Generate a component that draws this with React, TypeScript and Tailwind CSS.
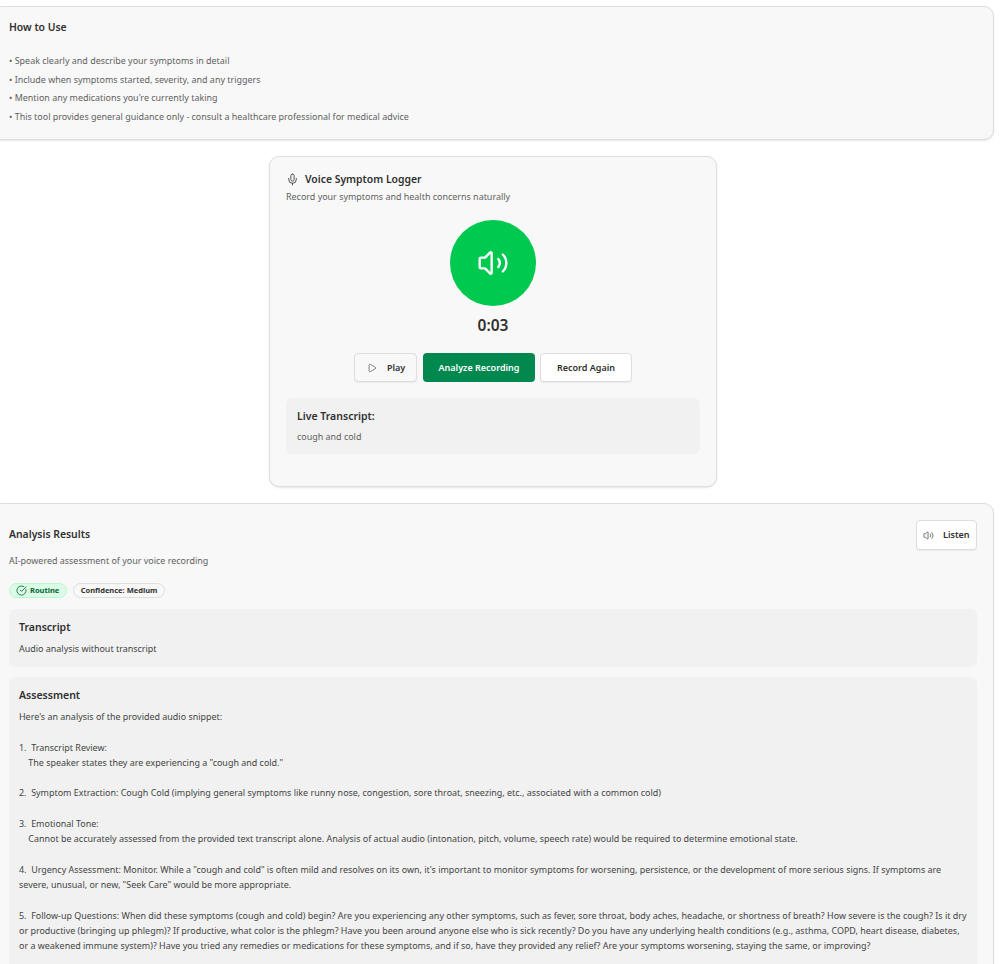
import { CircleCheckBig, Mic, Play, Volume2 } from "lucide-react";

const tips = [
  "Speak clearly and describe your symptoms in detail",
  "Include when symptoms started, severity, and any triggers",
  "Mention any medications you're currently taking",
  "This tool provides general guidance only - consult a healthcare professional for medical advice",
];

const assessment = [
  { lines: ["Here's an analysis of the provided audio snippet:"] },
  { lines: ["1.  Transcript Review:", "    The speaker states they are experiencing a \"cough and cold.\""] },
  { lines: ["2.  Symptom Extraction: Cough Cold (implying general symptoms like runny nose, congestion, sore throat, sneezing, etc., associated with a common cold)"] },
  { lines: ["3.  Emotional Tone:", "    Cannot be accurately assessed from the provided text transcript alone. Analysis of actual audio (intonation, pitch, volume, speech rate) would be required to determine emotional state."] },
  { lines: ["4.  Urgency Assessment: Monitor. While a \"cough and cold\" is often mild and resolves on its own, it's important to monitor symptoms for worsening, persistence, or the development of more serious signs. If symptoms are severe, unusual, or new, \"Seek Care\" would be more appropriate."] },
  { lines: ["5.  Follow-up Questions: When did these symptoms (cough and cold) begin? Are you experiencing any other symptoms, such as fever, sore throat, body aches, headache, or shortness of breath? How severe is the cough? Is it dry or productive (bringing up phlegm)? If productive, what color is the phlegm? Have you been around anyone else who is sick recently? Do you have any underlying health conditions (e.g., asthma, COPD, heart disease, diabetes, or a weakened immune system)? Have you tried any remedies or medications for these symptoms, and if so, have they provided any relief? Are your symptoms worsening, staying the same, or improving?"] },
];

export default function App() {
  return (
    <div className="h-[964px] overflow-hidden bg-white font-['Noto_Sans',sans-serif] text-[#303030]">
      <div className="ml-[-8px] flex w-[1002px] flex-col gap-4 pt-1.5">
        {/* How to use */}
        <section className="h-[134px] rounded-[10px] border border-[#dedede] bg-[#f8f8f8] px-4 pt-[13px] shadow-[0_1px_2px_rgba(0,0,0,0.1)]">
          <h2 className="text-[10.4px] leading-[15px] font-semibold">How to Use</h2>
          <ul className="mt-[17px] text-[8.95px] leading-[18.7px] text-[#5f5f5f]">
            {tips.map((tip) => (
              <li key={tip}>• {tip}</li>
            ))}
          </ul>
        </section>

        {/* Recorder */}
        <section className="mx-auto flex h-[331px] w-[448px] flex-col rounded-[10px] border border-[#dedede] bg-[#f8f8f8] px-4 pt-[15px] shadow-[0_1px_2px_rgba(0,0,0,0.1)]">
          <h2 className="flex items-center gap-[6px] text-[10.4px] leading-[15px] font-semibold">
            <Mic className="size-[13px] text-[#444]" strokeWidth={1.7} />
            Voice Symptom Logger
          </h2>
          <p className="mt-[3px] text-[8.95px] leading-[14px] text-[#5f5f5f]">Record your symptoms and health concerns naturally</p>
          <div className="mt-[16px] flex size-[86px] items-center justify-center self-center rounded-full bg-[#00c950]">
            <Volume2 className="size-[32px] text-white" strokeWidth={1.8} />
          </div>
          <div className="mt-[8px] text-center text-[15.5px] leading-[22px] font-semibold">0:03</div>
          <div className="mt-[17px] flex justify-center gap-[5px]">
            <button className="mr-px flex h-[29px] w-[63px] items-center gap-[10px] rounded-[4px] border border-[#dedede] bg-[#f8f8f8] pl-3 text-[9px] font-semibold shadow-[0_1px_1px_rgba(0,0,0,0.06)]">
              <Play className="size-[10px] text-[#444]" strokeWidth={1.6} />
              Play
            </button>
            <button className="h-[29px] w-[112px] rounded-[4px] bg-[#00884f] text-[9px] font-semibold text-white">Analyze Recording</button>
            <button className="h-[29px] w-[92px] rounded-[4px] border border-[#dedede] bg-white text-[9px] font-semibold shadow-[0_1px_1px_rgba(0,0,0,0.06)]">Record Again</button>
          </div>
          <div className="mt-4 h-[56px] rounded-[6px] bg-[#f1f1f1] px-[11px] pt-[11px]">
            <h3 className="text-[10.5px] leading-[15px] font-semibold">Live Transcript:</h3>
            <p className="mt-[6px] text-[8.95px] leading-[14px] text-[#5f5f5f]">cough and cold</p>
          </div>
        </section>

        {/* Analysis */}
        <section className="h-[600px] rounded-[10px] border border-[#dedede] bg-[#f8f8f8] px-4 pt-4 shadow-[0_1px_2px_rgba(0,0,0,0.1)]">
          <div className="flex justify-between">
            <div>
              <h2 className="mt-[7px] text-[10.4px] leading-[15px] font-semibold">Analysis Results</h2>
              <p className="mt-[12px] text-[8.95px] leading-[14px] text-[#5f5f5f]">AI-powered assessment of your voice recording</p>
            </div>
            <button className="flex h-[30px] w-[61px] items-center gap-[9px] rounded-[4px] border border-[#dedede] bg-white pl-[6px] text-[9px] font-semibold shadow-[0_1px_1px_rgba(0,0,0,0.06)]">
              <Volume2 className="size-[11px] text-[#444]" strokeWidth={1.6} />
              Listen
            </button>
          </div>
          <div className="mt-[15px] flex gap-[6px]">
            <span className="flex h-[15px] w-[58px] items-center gap-[3px] rounded-full border border-[#b9f8cf] bg-[#dcfce7] pl-[6px] text-[7.5px] font-bold text-[#016630]">
              <CircleCheckBig className="size-[11px]" strokeWidth={1.8} />
              Routine
            </span>
            <span className="flex h-[15px] w-[92px] items-center justify-center rounded-full border border-[#dedede] bg-[#f8f8f8] text-[7.5px] font-bold">Confidence: Medium</span>
          </div>
          <div className="mt-[11px] h-[58px] rounded-[6px] bg-[#f1f1f1] px-[10px] pt-[11px]">
            <h3 className="text-[10.5px] leading-[15px] font-semibold">Transcript</h3>
            <p className="mt-[7px] text-[8.95px] leading-[14px] text-[#444]">Audio analysis without transcript</p>
          </div>
          <div className="mt-[10px] rounded-[6px] bg-[#f1f1f1] px-[10px] pt-[11px] pb-4">
            <h3 className="text-[10.5px] leading-[15px] font-semibold">Assessment</h3>
            <div className="mt-[6px] flex flex-col gap-[15.3px] text-[8.95px] leading-[15.3px] whitespace-pre-wrap text-[#444]">
              {assessment.map((block, i) => (
                <div key={i}>
                  {block.lines.map((line) => (
                    <p key={line}>{line}</p>
                  ))}
                </div>
              ))}
            </div>
          </div>
        </section>
      </div>
    </div>
  );
}
